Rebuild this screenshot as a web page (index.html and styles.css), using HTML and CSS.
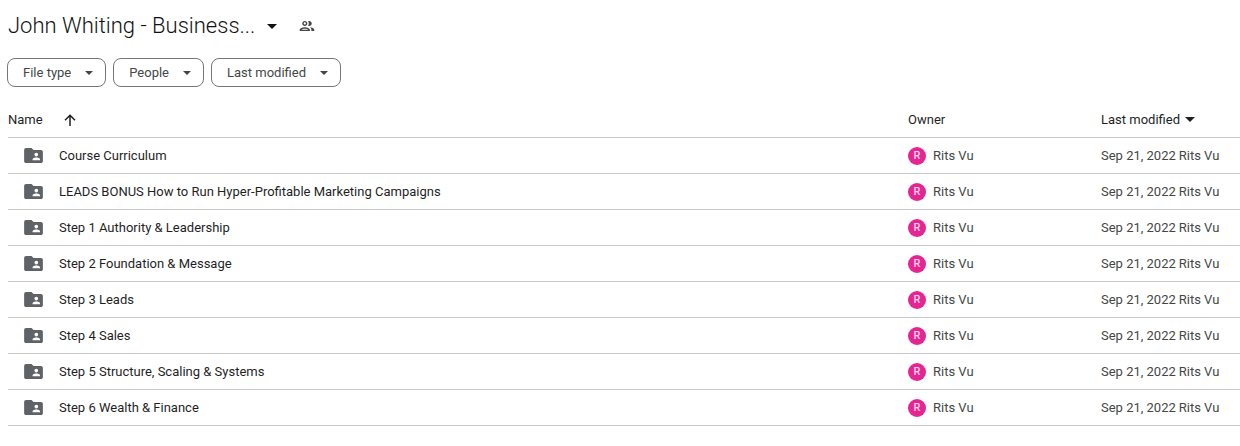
FILE: index.html
```html
<!DOCTYPE html>
<html lang="en">
<head>
<meta charset="utf-8">
<meta name="viewport" content="width=device-width, initial-scale=1">
<title>John Whiting - Business...</title>
<link rel="stylesheet" href="styles.css">
</head>
<body>
<svg class="sprite" aria-hidden="true">
  <symbol id="caret" viewBox="0 0 10 5"><path d="M0 0h10L5 5z"/></symbol>
  <symbol id="arrow-up" viewBox="0 0 12 12"><path d="M6 12V1.5M1 6.2 6 1.2l5 5" fill="none" stroke="currentColor" stroke-width="1.5"/></symbol>
  <symbol id="people" viewBox="1 4 22 16"><path d="M9 13.75c-2.34 0-7 1.17-7 3.5V19h14v-1.75c0-2.33-4.66-3.5-7-3.5zM4.34 17c.84-.58 2.87-1.25 4.66-1.25s3.82.67 4.66 1.25H4.34zM9 12c1.93 0 3.5-1.57 3.5-3.5S10.93 5 9 5 5.500 6.570 5.500 8.500 7.070 12 9 12zm0-5c.83 0 1.500.67 1.500 1.500S9.830 10 9 10s-1.500-.67-1.500-1.500S8.170 7 9 7zm7.040 6.810c1.160.84 1.960 1.960 1.960 3.440V19h4v-1.750c0-2.020-3.500-3.170-5.960-3.440zM15 12c1.930 0 3.500-1.570 3.500-3.500S16.930 5 15 5c-.54 0-1.040.13-1.500.35.63.89 1 1.980 1 3.150s-.37 2.260-1 3.150c.46.22.96.35 1.500.35z"/></symbol>
  <symbol id="folder" viewBox="2 4 20 16"><path d="M20 6h-8l-2-2H4c-1.100 0-2 .9-2 2v12c0 1.100.9 2 2 2h16c1.100 0 2-.9 2-2V8c0-1.100-.9-2-2-2zm-5 3c1.100 0 2 .9 2 2s-.9 2-2 2-2-.9-2-2 .9-2 2-2zm4 8h-8v-1c0-1.330 2.670-2 4-2s4 .67 4 2v1z"/></symbol>
</svg>
<header class="header">
  <h1 class="title"><button class="title-button" type="button">John Whiting - Business...<svg class="caret caret-title"><use href="#caret"/></svg></button></h1>
  <button class="share" type="button" aria-label="Shared with people"><svg class="icon-people"><use href="#people"/></svg></button>
</header>
<div class="filters">
  <button class="chip" type="button">File type<svg class="caret caret-chip"><use href="#caret"/></svg></button>
  <button class="chip" type="button">People<svg class="caret caret-chip"><use href="#caret"/></svg></button>
  <button class="chip" type="button">Last modified<svg class="caret caret-chip"><use href="#caret"/></svg></button>
</div>
<main class="files">
<table class="table">
  <thead>
    <tr>
      <th class="col-name" scope="col"><span class="heading heading-name">Name<button class="sort" type="button" aria-label="Reverse sort direction"><svg class="icon-arrow"><use href="#arrow-up"/></svg></button></span></th>
      <th class="col-owner" scope="col">Owner</th>
      <th class="col-modified" scope="col"><button class="sort heading" type="button">Last modified<svg class="caret caret-heading"><use href="#caret"/></svg></button></th>
    </tr>
  </thead>
  <tbody>
    <tr><td><span class="file"><svg class="icon-folder"><use href="#folder"/></svg>Course Curriculum</span></td><td><span class="owner"><span class="avatar">R</span>Rits Vu</span></td><td><span class="modified"><span>Sep 21, 2022</span><span>Rits Vu</span></span></td></tr>
    <tr><td><span class="file"><svg class="icon-folder"><use href="#folder"/></svg>LEADS BONUS How to Run Hyper-Profitable Marketing Campaigns</span></td><td><span class="owner"><span class="avatar">R</span>Rits Vu</span></td><td><span class="modified"><span>Sep 21, 2022</span><span>Rits Vu</span></span></td></tr>
    <tr><td><span class="file"><svg class="icon-folder"><use href="#folder"/></svg>Step 1 Authority &amp; Leadership</span></td><td><span class="owner"><span class="avatar">R</span>Rits Vu</span></td><td><span class="modified"><span>Sep 21, 2022</span><span>Rits Vu</span></span></td></tr>
    <tr><td><span class="file"><svg class="icon-folder"><use href="#folder"/></svg>Step 2 Foundation &amp; Message</span></td><td><span class="owner"><span class="avatar">R</span>Rits Vu</span></td><td><span class="modified"><span>Sep 21, 2022</span><span>Rits Vu</span></span></td></tr>
    <tr><td><span class="file"><svg class="icon-folder"><use href="#folder"/></svg>Step 3 Leads</span></td><td><span class="owner"><span class="avatar">R</span>Rits Vu</span></td><td><span class="modified"><span>Sep 21, 2022</span><span>Rits Vu</span></span></td></tr>
    <tr><td><span class="file"><svg class="icon-folder"><use href="#folder"/></svg>Step 4 Sales</span></td><td><span class="owner"><span class="avatar">R</span>Rits Vu</span></td><td><span class="modified"><span>Sep 21, 2022</span><span>Rits Vu</span></span></td></tr>
    <tr><td><span class="file"><svg class="icon-folder"><use href="#folder"/></svg>Step 5 Structure, Scaling &amp; Systems</span></td><td><span class="owner"><span class="avatar">R</span>Rits Vu</span></td><td><span class="modified"><span>Sep 21, 2022</span><span>Rits Vu</span></span></td></tr>
    <tr><td><span class="file"><svg class="icon-folder"><use href="#folder"/></svg>Step 6 Wealth &amp; Finance</span></td><td><span class="owner"><span class="avatar">R</span>Rits Vu</span></td><td><span class="modified"><span>Sep 21, 2022</span><span>Rits Vu</span></span></td></tr>
  </tbody>
</table>
</main>
</body>
</html>
```

FILE: styles.css
```css
* { box-sizing: border-box; }

body {
  margin: 0;
  background: #fff;
  color: #1f1f1f;
  font-family: Roboto, sans-serif;
  font-size: 13px;
  line-height: 20px;
}

button {
  padding: 0;
  border: 0;
  background: none;
  color: inherit;
  font: inherit;
  cursor: pointer;
}

svg { display: block; flex: none; fill: currentColor; }

.sprite { display: none; }

.header {
  display: flex;
  align-items: center;
  gap: 22px;
  padding: 10px 8px 0;
}

.title { margin: 0; color: #111; font-size: 22px; font-weight: 300; line-height: 32px; }

.title-button { display: flex; align-items: center; gap: 12px; white-space: nowrap; }

.caret { width: 10px; height: 5px; }
.caret-chip { width: 8px; height: 4px; }

.share { color: #444746; }
.icon-people { width: 16px; height: 12px; }

.filters { display: flex; flex-wrap: wrap; gap: 7px; padding: 16px 7px 0; }

.chip {
  display: flex;
  align-items: center;
  gap: 14px;
  height: 29px;
  padding: 0 12px 0 15px;
  border: 1px solid #747775;
  border-radius: 8px;
  color: #444746;
  white-space: nowrap;
}

.files { padding: 15px 0 20px 8px; }

.table { width: 100%; border-collapse: collapse; table-layout: fixed; }

.table th, .table td {
  height: 36px;
  padding: 1px 0 0;
  border-bottom: 1px solid #c7c7c7;
  font-weight: 400;
  text-align: left;
  white-space: nowrap;
}

.table th { height: 35px; }

.table td { color: #444746; }

.col-owner { width: 193px; }
.col-modified { width: 139px; }

.heading { display: flex; align-items: center; gap: 5px; }
.heading-name { gap: 21px; }

.icon-arrow { width: 12px; height: 12px; }

.file { display: flex; align-items: center; gap: 16px; padding-left: 16px; color: #1f1f1f; }
.icon-folder { width: 19px; height: 15px; color: #5f6368; }

.owner { display: flex; align-items: center; gap: 7px; }

.avatar {
  display: grid;
  place-items: center;
  width: 18px;
  height: 18px;
  border-radius: 50%;
  background: #e52592;
  color: #fbd0e8;
  font-size: 11px;
  font-weight: 500;
  line-height: 18px;
}

.modified { display: flex; gap: 3px; }
```
